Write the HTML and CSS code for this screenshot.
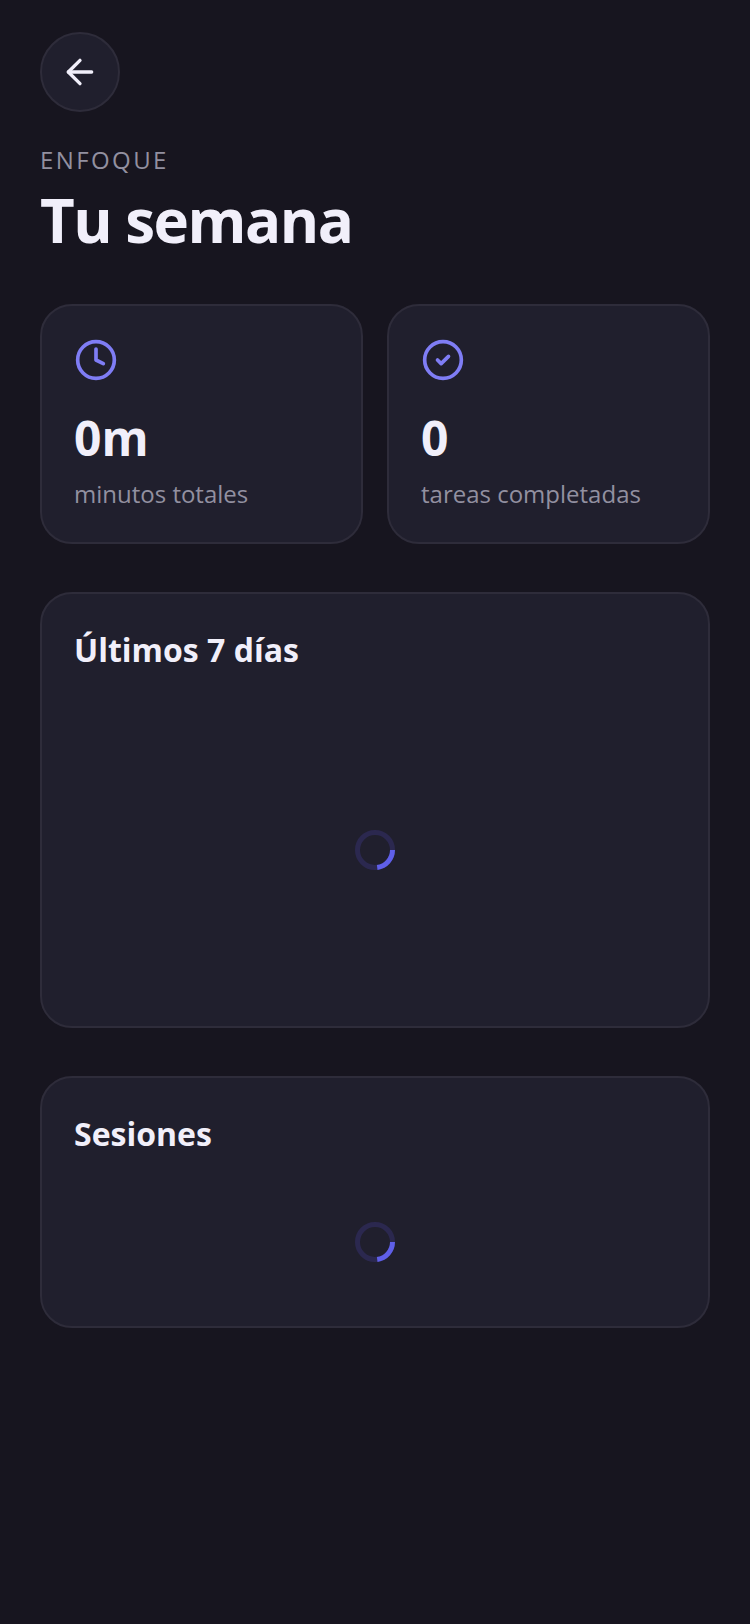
FILE: index.html
```html
<!DOCTYPE html>
<html lang="es">
<head>
    <meta charset="UTF-8">
    <meta name="viewport" content="width=device-width, initial-scale=1.0">
    <title>Tu semana</title>
    <link rel="stylesheet" href="styles.css">
</head>
<body>
    <main class="page">
        <button type="button" class="back-btn" aria-label="Volver">
            <svg viewBox="0 0 24 24" aria-hidden="true">
                <path d="m12 19-7-7 7-7"/>
                <path d="M19 12H5"/>
            </svg>
        </button>

        <header class="page-header">
            <p class="eyebrow">Enfoque</p>
            <h1>Tu semana</h1>
        </header>

        <!-- Totals -->
        <section class="stats">
            <div class="card">
                <svg class="stat-icon" viewBox="0 0 24 24" aria-hidden="true">
                    <circle cx="12" cy="12" r="10"/>
                    <path d="M12 6v6l4 2"/>
                </svg>
                <p class="stat-value">0m</p>
                <p class="stat-label">minutos totales</p>
            </div>
            <div class="card">
                <svg class="stat-icon" viewBox="0 0 24 24" aria-hidden="true">
                    <circle cx="12" cy="12" r="10"/>
                    <path d="m9 12 2 2 4-4"/>
                </svg>
                <p class="stat-value">0</p>
                <p class="stat-label">tareas completadas</p>
            </div>
        </section>

        <!-- Chart -->
        <section class="card">
            <h2>Últimos 7 días</h2>
            <div class="loading loading-chart">
                <svg class="spinner" viewBox="0 0 40 40" role="img" aria-label="Cargando">
                    <circle class="spinner-track" cx="20" cy="20" r="17.5"/>
                    <path class="spinner-arc" d="M37.5 20A17.5 17.5 0 0 1 22.2 37.4"/>
                </svg>
            </div>
        </section>

        <!-- Sessions -->
        <section class="card">
            <h2>Sesiones</h2>
            <div class="loading">
                <svg class="spinner" viewBox="0 0 40 40" role="img" aria-label="Cargando">
                    <circle class="spinner-track" cx="20" cy="20" r="17.5"/>
                    <path class="spinner-arc" d="M37.5 20A17.5 17.5 0 0 1 22.2 37.4"/>
                </svg>
            </div>
        </section>
    </main>
</body>
</html>
```
FILE: styles.css
```css
/* General Styles */
* {
    box-sizing: border-box;
}

body {
    margin: 0;
    background-color: #17151f;
    color: #f1effa;
    font-family: "Open Sans", "Noto Sans", sans-serif;
    font-size: 24px;
    line-height: 32px;
}

h1,
h2,
p {
    margin: 0;
}

svg {
    display: block;
    fill: none;
    stroke: currentColor;
    stroke-width: 2;
    stroke-linecap: round;
    stroke-linejoin: round;
}

.page {
    padding: 32px 40px;
}

/* Header */
.back-btn {
    display: flex;
    align-items: center;
    justify-content: center;
    width: 80px;
    height: 80px;
    padding: 0;
    border: 2px solid #2e2c3a;
    border-radius: 50%;
    background-color: #201f2d;
    color: #f1effa;
    cursor: pointer;
}

.back-btn svg {
    width: 40px;
    height: 40px;
}

.page-header {
    margin: 32px 0 48px;
}

.eyebrow {
    color: #9290a0;
    letter-spacing: 0.1em;
    text-transform: uppercase;
}

h1 {
    margin-top: 8px;
    font-size: 60px;
    font-weight: 700;
    line-height: 72px;
    letter-spacing: -0.025em;
}

/* Cards */
.card {
    padding: 32px;
    border: 2px solid #2e2c3a;
    border-radius: 32px;
    background-color: #201f2d;
}

.card + .card {
    margin-top: 48px;
}

h2 {
    font-size: 32px;
    font-weight: 700;
    line-height: 48px;
}

/* Totals */
.stats {
    display: grid;
    grid-template-columns: 1fr 1fr;
    gap: 24px;
    margin-bottom: 48px;
}

.stats .card {
    margin-top: 0;
}

.stat-icon {
    width: 44px;
    height: 44px;
    color: #7f7df5;
}

.stat-value {
    margin-top: 24px;
    font-size: 48px;
    font-weight: 700;
    line-height: 64px;
}

.stat-label {
    margin-top: 8px;
    color: #9290a0;
}

/* Loading */
.loading {
    display: flex;
    align-items: center;
    justify-content: center;
    margin-top: 32px;
    padding: 32px 0;
}

.loading-chart {
    height: 288px;
}

.spinner {
    width: 40px;
    height: 40px;
    stroke-width: 5;
    stroke-linecap: butt;
}

.spinner-track {
    stroke: #2b284f;
}

.spinner-arc {
    stroke: #5f5fe8;
}
```
